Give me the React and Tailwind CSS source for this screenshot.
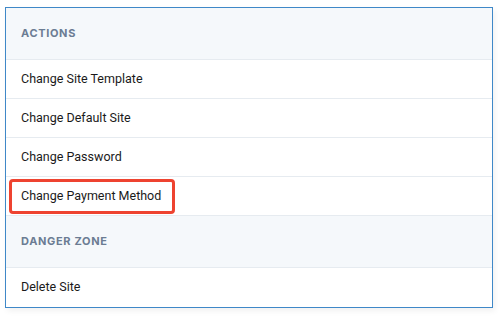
import React from "react";

const Header = ({ children }) => (
  <div className="h-[52px] flex items-center px-[15px] bg-[#f5f8fb] border-b border-[#e6ebf0]">
    <span
      className="text-[11px] font-bold tracking-[0.06em] text-[#6b7c93] uppercase"
      style={{ fontFamily: "Inter, sans-serif" }}
    >
      {children}
    </span>
  </div>
);

const Row = ({ children, last, highlight }) => (
  <div
    className={`relative h-[39px] flex items-center px-[15px] text-[12.5px] text-[#1a1a1a] ${
      last ? "" : "border-b border-[#e6ebf0]"
    }`}
  >
    {children}
    {highlight && (
      <div className="absolute left-[3px] top-[2px] w-[166px] h-[35px] border-[3px] border-[#ee4330] rounded-[4px]" />
    )}
  </div>
);

export default function App() {
  return (
    <div
      className="w-[503px] h-[317px] bg-white pt-[7px] pl-[5px]"
      style={{ fontFamily: "Roboto, 'Noto Sans', sans-serif" }}
    >
      <div className="w-[488px] border border-[#3f88c8] bg-white shadow-[2px_3px_6px_rgba(0,0,0,0.06)]">
        <Header>Actions</Header>
        <Row>Change Site Template</Row>
        <Row>Change Default Site</Row>
        <Row>Change Password</Row>
        <Row highlight>Change Payment Method</Row>
        <Header>Danger Zone</Header>
        <Row last>Delete Site</Row>
      </div>
    </div>
  );
}
